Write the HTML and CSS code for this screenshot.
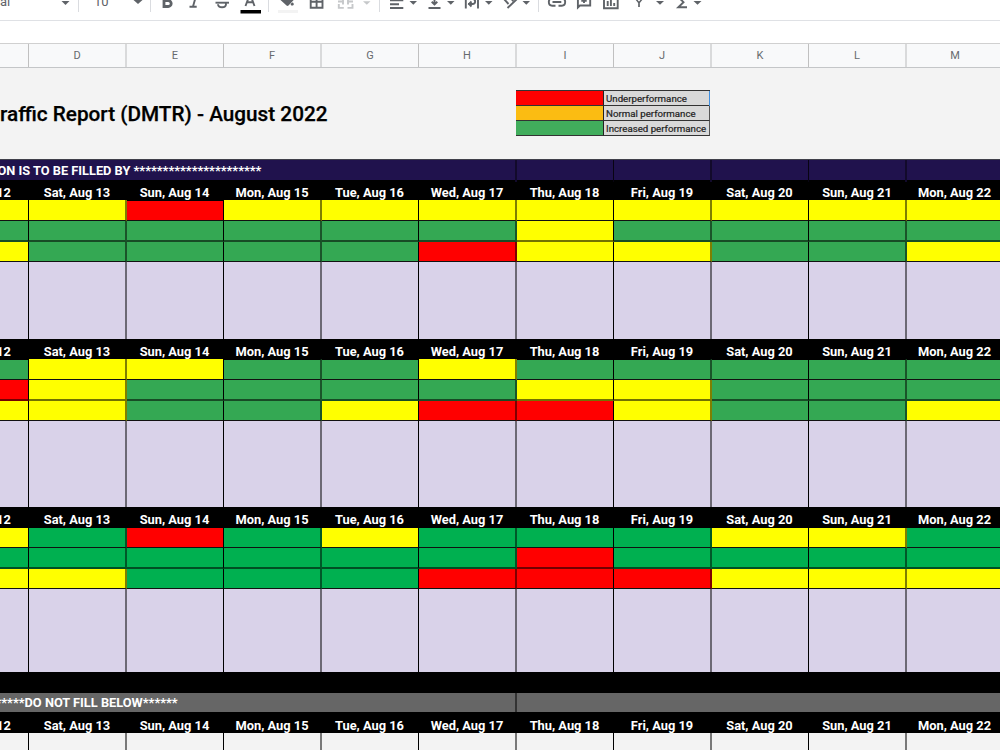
FILE: index.html
```html
<!DOCTYPE html>
<html lang="en">
<head>
<meta charset="utf-8">
<title>Traffic Report</title>
<link rel="stylesheet" href="styles.css">
</head>
<body>
<div class="toolbar">
  <div class="tool-group font-group">
    <span class="font-name">al</span>
    <svg width="78" height="12" viewBox="0 0 78 12"><path class="ic" d="M61.500 1h8l-4 4z"/></svg>
  </div>
  <div class="tool-group size-group">
    <span class="font-size">10</span>
    <svg width="71" height="12" viewBox="79 0 71 12"><path class="ic" d="M133.500 0h9l-4.500 4z"/></svg>
  </div>
  <div class="tool-group">
    <svg width="117" height="14" viewBox="151 0 117 14">
      <path class="ln bold" d="M164-5v11.500h4.200a3 3 0 0 0 0-6H164"/>
      <path class="ln" d="M189.500 6.800h7.200M196-4l-3 10.500" stroke-width="2.200"/>
      <path class="ln" d="M215.500 2.700H229"/>
      <path class="ln" d="M218 4.200c.3 4 7.800 4 8 0 0-.6-.1-1-.4-1.400"/>
      <path class="ln" d="M245.500 6l4.500-12 4.500 12M247.200 2.200h5.600" stroke-width="1.700"/>
      <path d="M240.500 10h20.500v3.500h-20.500z"/>
    </svg>
  </div>
  <div class="tool-group">
    <svg width="110" height="14" viewBox="269 0 110 14">
      <path class="ic" d="M280.500 0h13.200l-5.200 5.500q-1 .9-2 0zM292 2.800c1-1 1.800.6 1.800 1.400 0 1.700-3.300 1.700-3.100 0 0-.5.600-1 1.300-1.400z"/>
      <path fill="#f3f3f3" d="M278 10h20v3h-20z"/>
      <path class="ln" d="M310.700-4.500h11.800V7.800h-11.800zM316.600-5V8M310 1.700h13" stroke-width="1.700"/>
      <path class="ln pale" d="M338.800 4v3.900h5M352.500 4v3.900h-5M338 1.500h5M353 1.500h-5M338.800 0v-3M352.500 0v-3M343 4.500v-6M348 4.500v-6" stroke-width="1.500"/>
      <path class="pale-fill" d="M363 1.200h7.500l-3.700 3.500z"/>
    </svg>
  </div>
  <div class="tool-group">
    <svg width="158" height="14" viewBox="380 0 158 14">
      <path class="ln" d="M390 .3h13.300M390 4.200h9M390 8h13.300" stroke-width="1.600"/>
      <path class="ic" d="M409.500 1h7.500l-3.700 3.700zM447 1h7.500l-3.700 3.700zM485 1h7.500l-3.700 3.700zM522.500 1h7.500l-3.700 3.700z"/>
      <path class="ln" d="M428.500 8h12M434.500-4v8M431.700 1.800l2.800 2.700 2.800-2.700" stroke-width="1.600"/>
      <path class="ln" d="M465.800-4V8.500M478-4V8.500M468 4h4.500c3.500 0 3.500-5 0-5M471.500 1.500L469 4l2.500 2.500" stroke-width="1.600"/>
      <path class="ln" d="M507.500 8L517-1M504-1l4.500 5M511.500-1l1.800 2" stroke-width="1.700"/>
    </svg>
  </div>
  <div class="tool-group last">
    <svg width="181" height="14" viewBox="539 0 181 14">
      <path class="ln" d="M555.500 5.700h-3.300c-4.500 0-4.500-7.200 0-7.200M558.500 5.700h3.300c4.500 0 4.500-7.200 0-7.200M552.500 2h8.800" stroke-width="1.700"/>
      <path class="ln" d="M577.900-4v11.500l2-2h10.300V-4M584-2v5M581.300.8h5.400" stroke-width="1.600"/>
      <path class="ln" d="M604-5v13.300h13.700V-5M607.700 1v5M610.900-1v7M614.200 3v3" stroke-width="1.700"/>
      <path class="ln thin" d="M635.500-1.500l3.400 4.200V7M642.500-1.500l-3.400 4.200V7"/>
      <path class="ic" d="M656 1h8l-4 3.800zM693.500 1h8l-4 3.800z"/>
      <path class="ln" d="M687 7.200h-8.700l5.200-5-5-5" stroke-width="2"/>
    </svg>
  </div>
</div>
<div class="formula-bar"></div>
<div class="grid-row letters" id="letters"></div>
<div class="title-area">
  <h1 class="title">raffic Report (DMTR) - August 2022</h1>
  <div class="legend">
    <div class="swatch low"></div><div class="label">Underperformance</div>
    <div class="swatch normal"></div><div class="label">Normal performance</div>
    <div class="swatch high"></div><div class="label">Increased performance</div>
    <div class="selection"></div>
  </div>
</div>
<div class="banner fill-banner">
  <div class="banner-text"><span>ON IS TO BE FILLED BY **********************</span></div>
  <div></div><div class="soft"></div><div></div><div class="soft"></div><div></div>
</div>
<div id="sheet"></div>
<script src="sheet.js"></script>
</body>
</html>
```

FILE: styles.css
```css
* { box-sizing: border-box; }
body {
  margin: 0;
  width: 1000px;
  height: 750px;
  overflow: hidden;
  background: #f3f3f3;
  font-family: Roboto, "Liberation Sans", sans-serif;
}
svg { display: block; }
.toolbar {
  display: flex;
  height: 21px;
  background: #fff;
  border-bottom: 1px solid #dfe1e5;
  overflow: hidden;
}
.tool-group { height: 12px; border-right: 1px solid #dadce0; display: grid; flex: none; }
.tool-group > * { grid-area: 1 / 1; }
.tool-group.last { border: 0; }
.font-group { width: 79px; }
.size-group { width: 72px; }
.font-name, .font-size { font-size: 13px; line-height: 14px; color: #5f6368; margin-top: -5px; height: 14px; }
.font-size { padding-left: 15px; }
.ic { fill: #5f6368; }
.ln { fill: none; stroke: #5f6368; stroke-width: 1.900; }
.ln.bold { stroke-width: 2.800; }
.ln.thin { stroke-width: 1.500; }
.ln.pale { stroke: #c6c8ca; }
.pale-fill { fill: #c6c8ca; }
.formula-bar { height: 22px; background: #fff; }

.grid-row, .banner {
  display: grid;
  grid-template-columns: 29px 98px 97px 98px 97px 98px 97px 98px 97px 98px 97px;
}
.letters {
  height: 25px;
  background: #f8f9fa;
  border-top: 1px solid #d0d0d0;
  border-bottom: 1px solid #c4c6c8;
}
.letters div {
  border-right: 1px solid #c0c0c0;
  text-align: center;
  font-size: 11px;
  line-height: 23px;
  color: #666a6e;
}
.letters div:nth-child(even) { border-right: 2px solid #d9dadb; }

.title-area { display: flex; height: 91px; }
.title {
  width: 516px;
  margin: 0;
  padding-top: 34px;
  font-size: 20.750px;
  font-weight: 500;
  line-height: 24px;
  color: #000;
  -webkit-text-stroke: .25px #000;
  white-space: nowrap;
}
.legend {
  position: relative;
  display: grid;
  grid-template-columns: 87px 107px;
  grid-template-rows: 15px 15px 15px;
  width: 194px;
  height: 46px;
  margin-top: 22px;
  border-top: 1px solid #333;
}
.swatch, .label { border-bottom: 1px solid #333; }
.low { background: #f00; }
.normal { background: #fbbc12; }
.high { background: #41ad5c; }
.label {
  background: #d9d9d9;
  border-left: 1px solid #222;
  border-right: 1px solid #555;
  padding-left: 2px;
  font-size: 9.700px;
  line-height: 15px;
  color: #222;
  -webkit-text-stroke: .2px #222;
  white-space: nowrap;
}
.selection { position: absolute; right: 0; top: 0; width: 1px; height: 15px; background: #3f8fe0; }

.banner { height: 21px; background: #20124d; border-top: 1px solid #40404a; }
.banner div { border-right: 1px solid #080412; }
.banner div.soft { border-right: 2px solid #120a2b; }
.banner .banner-text {
  grid-column: 1 / 7;
  border-right: 2px solid #120a2b;
  color: #fff;
  font-size: 12.800px;
  font-weight: 700;
  line-height: 22px;
  white-space: nowrap;
}
.fill-banner .banner-text span { margin-left: -2.500px; }
.stop-banner { height: 19px; background: #666; border: 0; }
.banner.stop-banner .banner-text { border-right: 2px solid #333; line-height: 20px; height: 19px; }
.stop-banner .banner-text span { margin-left: -4.500px; }

.dates { background: #000; }
.dates div {
  display: flex;
  align-items: flex-end;
  justify-content: center;
  padding-right: 2px;
  color: #fff;
  font-size: 12.850px;
  font-weight: 700;
  line-height: 14px;
  white-space: nowrap;
}
.dates.raised div { padding-bottom: 1px; }
.dates div:first-child { justify-content: flex-end; padding-right: 18px; }
.cells div { border-right: 1px solid #000; }
.cells div:nth-child(even) { border-right: 2px solid rgba(0, 0, 0, .5); }
.line-crisp div { border-bottom: 1px solid #111; }
.line-soft div { border-bottom: 2px solid rgba(0, 0, 0, .55); }
.yellow { background: #ff0; }
.red { background: #f00; }
.green { background: #34a853; }
.bright .green { background: #00b050; }
.under-dates .red, .under-dates .green { border-top: 1px solid #000; }
.notes { background: #d9d2e9; }
.plain { background: #f3f3f3; }
.gap { height: 21px; background: #000; }
```

FILE: sheet.js
```js
const sheet = document.getElementById('sheet');
const letters = document.getElementById('letters');
const colors = { Y: 'yellow', R: 'red', G: 'green', '-': '' };

function row(parent, height, kind, items, asText) {
  const r = document.createElement('div');
  r.className = 'grid-row ' + kind;
  r.style.height = height + 'px';
  for (const item of items) {
    const c = document.createElement('div');
    if (asText) c.textContent = item;
    else if (colors[item]) c.className = colors[item];
    r.append(c);
  }
  parent.append(r);
}

for (const l of ['', ...'DEFGHIJKLM']) {
  const c = document.createElement('div');
  c.textContent = l;
  letters.append(c);
}

const days = ['Sat', 'Sun', 'Mon', 'Tue', 'Wed', 'Thu', 'Fri', 'Sat', 'Sun', 'Mon'];
const dates = ['12', ...days.map((d, i) => `${d}, Aug ${13 + i}`)];
const blank = '-'.repeat(11);

row(sheet, 20, 'dates', dates, true);
row(sheet, 21, 'cells under-dates line-crisp', 'YYRYYYYYYYY');
row(sheet, 21, 'cells line-soft', 'GGGGGGYGGGG');
row(sheet, 20, 'cells line-crisp', 'YGGGGRYYGGY');
row(sheet, 77, 'cells notes', blank);

row(sheet, 20, 'dates', dates, true);
row(sheet, 21, 'cells under-dates line-crisp', 'GYYGGYGGGGG');
row(sheet, 21, 'cells line-soft', 'RYGGGGYYGGG');
row(sheet, 20, 'cells line-crisp', 'YYGGYRRYGGY');
row(sheet, 86, 'cells notes', blank);

row(sheet, 21, 'dates raised', dates, true);
row(sheet, 20, 'cells bright line-crisp', 'YGRGYGGGYYG');
row(sheet, 21, 'cells bright line-soft', 'GGGGGGRGGGG');
row(sheet, 20, 'cells bright line-crisp', 'YYGGGRRRYYY');
row(sheet, 83, 'cells notes', blank);

const gap = document.createElement('div');
gap.className = 'gap';
sheet.append(gap);
const stop = document.createElement('div');
stop.className = 'banner stop-banner';
const cell = document.createElement('div');
cell.className = 'banner-text';
const text = document.createElement('span');
text.textContent = '*****DO NOT FILL BELOW******';
cell.append(text);
stop.append(cell);
sheet.append(stop);
row(sheet, 21, 'dates', dates, true);
row(sheet, 17, 'cells plain', blank);
```
